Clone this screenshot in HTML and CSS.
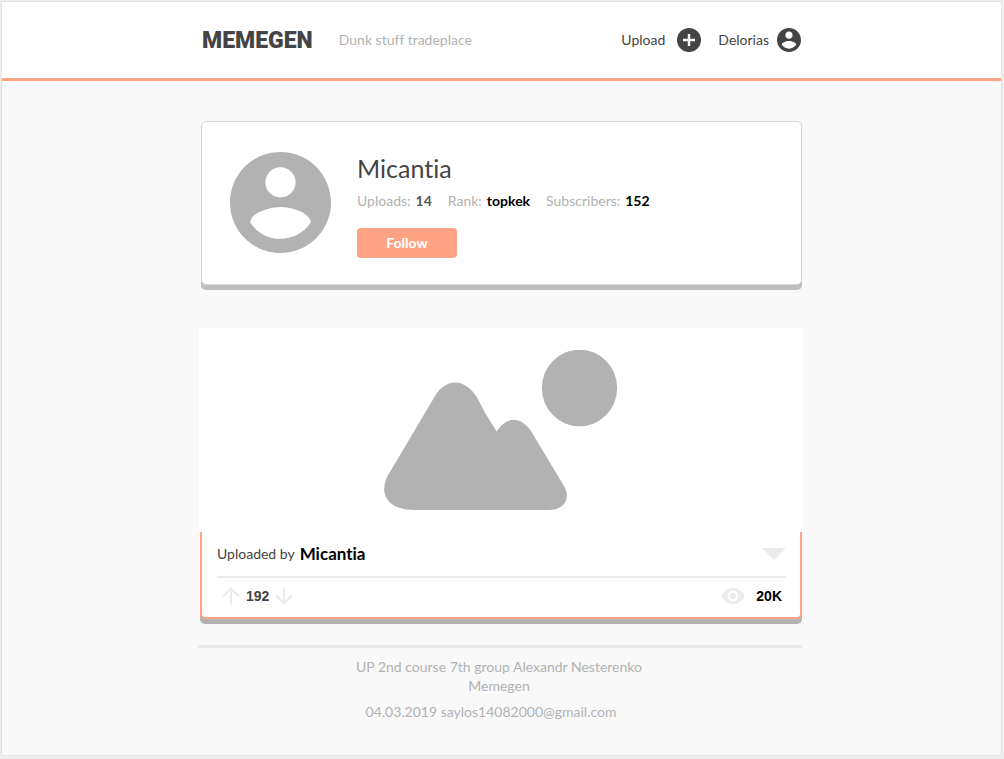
FILE: index.html
```html
<!DOCTYPE html>
<html lang="en">
<head>
<meta charset="utf-8">
<meta name="viewport" content="width=device-width, initial-scale=1">
<title>Memegen</title>
<link rel="stylesheet" href="styles.css">
</head>
<body>
<div class="page">
  <header class="site-header">
    <div class="site-header__inner">
      <a class="logo" href="#">MEMEGEN</a>
      <span class="tagline">Dunk stuff tradeplace</span>
      <nav class="nav">
        <a class="nav__link nav__link--upload" href="#">Upload
          <svg class="nav__icon" viewBox="0 0 24 24" aria-hidden="true"><circle cx="12" cy="12" r="12"/><path class="cutout" d="M10.8 6h2.4v4.8H18v2.4h-4.8V18h-2.4v-4.8H6v-2.4h4.8z"/></svg>
        </a>
        <a class="nav__link" href="#">Delorias
          <svg class="nav__icon" viewBox="2 2 20 20" aria-hidden="true"><path d="M12 2C6.480 2 2 6.480 2 12s4.480 10 10 10 10-4.480 10-10S17.520 2 12 2zm0 3c1.660 0 3 1.340 3 3s-1.340 3-3 3-3-1.340-3-3 1.340-3 3-3zm0 14.200c-2.500 0-4.710-1.280-6-3.220.030-1.990 4-3.080 6-3.080 1.990 0 5.970 1.090 6 3.080-1.290 1.940-3.500 3.220-6 3.220z"/></svg>
        </a>
      </nav>
    </div>
  </header>

  <div class="content">
    <main>
      <section class="profile">
        <svg class="profile__avatar" viewBox="2 2 20 20" role="img" aria-label="Avatar"><path d="M12 2C6.480 2 2 6.480 2 12s4.480 10 10 10 10-4.480 10-10S17.520 2 12 2zm0 3c1.660 0 3 1.340 3 3s-1.340 3-3 3-3-1.340-3-3 1.340-3 3-3zm0 14.200c-2.500 0-4.710-1.280-6-3.220.030-1.990 4-3.080 6-3.080 1.990 0 5.970 1.090 6 3.080-1.290 1.940-3.500 3.220-6 3.220z"/></svg>
        <div class="profile__info">
          <h1 class="profile__name">Micantia</h1>
          <dl class="stats">
            <div class="stats__item"><dt>Uploads:</dt><dd class="stats__soft">14</dd></div>
            <div class="stats__item"><dt>Rank:</dt><dd>topkek</dd></div>
            <div class="stats__item"><dt>Subscribers:</dt><dd>152</dd></div>
          </dl>
          <button class="follow" type="button">Follow</button>
        </div>
      </section>

      <article class="post">
        <div class="post__picture">
          <svg class="post__image" viewBox="0 0 234 160" role="img" aria-label="Picture">
            <path d="M30 160C8 160-6 148 3 127L51 46C62 28 80 28 92 46C96 52 99 60 103 66L112.700 81.500C123 66 136 66 147 81L180 136C187 148 181 160 165 160Z"/>
            <ellipse cx="195.500" cy="38" rx="37.700" ry="38.300"/>
          </svg>
        </div>
        <div class="post__body">
          <div class="post__author">
            <span>Uploaded by</span>
            <a class="post__name" href="#">Micantia</a>
            <button class="icon-button post__menu" type="button" aria-label="More"><svg class="post__caret" viewBox="0 0 24 12"><path d="M0 0h24L12 12z"/></svg></button>
          </div>
          <div class="post__meta">
            <button class="icon-button" type="button" aria-label="Vote up"><svg class="post__arrow" viewBox="0 0 18 18"><path d="M9 17.500V2M1 9.500l8-8 8 8"/></svg></button>
            <span class="post__votes">192</span>
            <button class="icon-button" type="button" aria-label="Vote down"><svg class="post__arrow" viewBox="0 0 18 18"><path d="M9 .500V16M1 8.500l8 8 8-8"/></svg></button>
            <svg class="post__eye" viewBox="1 4.500 22 15" role="img" aria-label="Views"><path d="M12 4.500C7 4.500 2.730 7.610 1 12c1.730 4.390 6 7.500 11 7.500s9.270-3.110 11-7.500c-1.730-4.390-6-7.500-11-7.500zM12 17c-2.760 0-5-2.240-5-5s2.240-5 5-5 5 2.240 5 5-2.240 5-5 5zm0-8c-1.660 0-3 1.340-3 3s1.340 3 3 3 3-1.340 3-3-1.340-3-3-3z"/></svg>
            <span class="post__views">20K</span>
          </div>
        </div>
      </article>
    </main>

    <footer class="site-footer">
      <p>UP 2nd course 7th group Alexandr Nesterenko<br>Memegen</p>
      <p class="site-footer__contact">04.03.2019 saylos14082000@gmail.com</p>
    </footer>
  </div>
</div>
</body>
</html>
```
FILE: styles.css
```css
* { box-sizing: border-box; }

body {
  margin: 0;
  min-height: 100vh;
  display: flex;
  padding: 1px 2px 3px 1px;
  background: #eeeeee;
  color: #444444;
  font: 14px/20px Lato, "Open Sans", sans-serif;
  font-variant-ligatures: none;
}

h1, p, dl, dd { margin: 0; }
a { color: inherit; text-decoration: none; }
svg { display: block; }
button { font: inherit; cursor: pointer; }

.page {
  flex: 1;
  min-width: 0;
  border: 1px solid #e3e3e3;
  background: #f9f9f9;
}

.site-header {
  padding: 26px 0;
  border-bottom: 3px solid #ffa384;
  background: #ffffff;
}

.site-header__inner,
.content {
  max-width: 601px;
  margin: 0 auto;
}

.site-header__inner {
  display: flex;
  align-items: center;
  height: 24px;
  padding: 0 1px;
}

.logo {
  padding-top: 2px;
  font: 900 23px/24px Roboto, sans-serif;
}

.tagline {
  margin-left: 26px;
  color: #b2b2b2;
}

.nav {
  display: flex;
  gap: 17px;
  margin-left: auto;
}

.nav__link {
  display: flex;
  align-items: center;
  gap: 8px;
}

.nav__link--upload { gap: 12px; }

.nav__icon {
  width: 24px;
  height: 24px;
  fill: #444444;
}

.nav__icon .cutout { fill: #ffffff; }

.profile {
  display: flex;
  gap: 26px;
  margin-top: 40px;
  padding: 30px 28px 26px;
  border: 1px solid #d6d6d6;
  border-radius: 5px;
  background: #ffffff;
  box-shadow: 0 5px #bfbfbf;
}

.profile__avatar {
  flex: none;
  width: 101px;
  height: 101px;
  fill: #b2b2b2;
}

.profile__name {
  font-size: 25px;
  font-weight: 400;
  line-height: 32px;
}

.stats {
  display: flex;
  flex-wrap: wrap;
  gap: 16px;
  margin: 7px 0 17px;
}

.stats__item {
  display: flex;
  gap: 5px;
}

.stats dt { color: #b2b2b2; }

.stats dd {
  color: #000000;
  font-weight: 700;
}

.stats .stats__soft { color: #555555; }

.follow {
  display: block;
  width: 100px;
  height: 30px;
  padding: 0;
  border: 0;
  border-radius: 4px;
  background: #ffa384;
  color: #ffffff;
  font-weight: 700;
}

.post { margin-top: 43px; }

.post__picture {
  margin: 0 -1px 0 -2px;
  padding: 22px 0;
  background: #ffffff;
}

.post__image {
  width: 234px;
  height: 160px;
  margin: 0 auto;
  fill: #b2b2b2;
}

.post__body {
  margin-left: -1px;
  padding: 0 14px 0 15px;
  border: 2px solid #ffa384;
  border-top: 0;
  border-radius: 0 0 5px 5px;
  background: #ffffff;
  box-shadow: 0 5px #b2b2b2;
}

.post__author {
  display: flex;
  align-items: center;
  gap: 5px;
  padding: 12px 0;
  border-bottom: 2px solid #ebebeb;
}

.post__name {
  color: #000000;
  font-size: 17px;
  font-weight: 700;
}

.icon-button {
  padding: 0;
  border: 0;
  background: none;
}

.post__menu { margin-left: auto; }

.post__caret {
  width: 24px;
  height: 12px;
  fill: #ebebeb;
}

.post__meta {
  display: flex;
  align-items: center;
  gap: 6px;
  padding: 8px 4px 11px 5px;
  font: 700 14px/20px "Liberation Sans", Arial, sans-serif;
}

.post__arrow {
  width: 18px;
  height: 18px;
  fill: none;
  stroke: #ebebeb;
  stroke-width: 2;
}

.post__eye {
  width: 24px;
  height: 16px;
  margin: 0 5px 0 auto;
  fill: #ebebeb;
}

.post__views { color: #000000; }

.site-footer {
  margin: 26px 0 0 -3px;
  padding: 9px 2px 30px 0;
  border-top: 3px solid #ebebeb;
  color: #b2b2b2;
  line-height: 19px;
  text-align: center;
}

.site-footer__contact {
  margin-top: 7px;
  padding-right: 16px;
}
```
